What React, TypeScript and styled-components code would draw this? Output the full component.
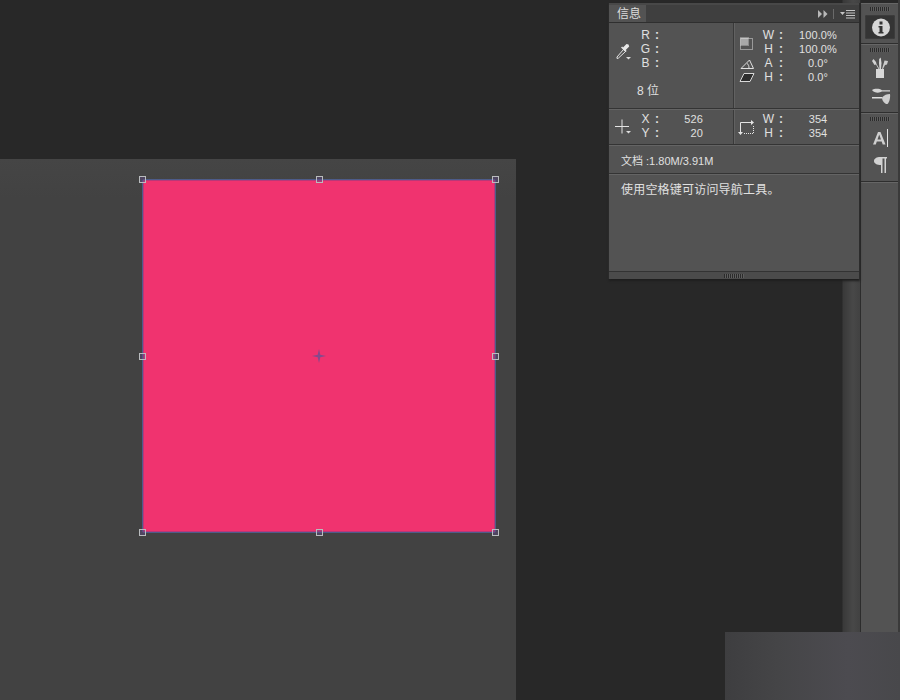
import React from "react";
import styled, { createGlobalStyle } from "styled-components";

const Global = createGlobalStyle`
  html, body { margin: 0; padding: 0; background: #282828; overflow: hidden; }
  * { box-sizing: border-box; }
`;

const Screen = styled.div`
  position: relative;
  width: 900px;
  height: 700px;
  display: flex;
  background: #282828;
  overflow: hidden;
  font-family: "Liberation Sans", "Noto Sans CJK SC", sans-serif;
`;

const Workspace = styled.div`
  flex: 1;
  min-width: 0;
  padding-top: 159px;
  background: linear-gradient(90deg, #282828 0, #282828 842px, #393939 843px, #484848 853px, #424242 859px);
`;

const Sheet = styled.div`
  width: 516px;
  height: 541px;
  padding: 20px 0 0 142px;
  background: #424242;
  background-image: linear-gradient(180deg, #454545, #424242 40px);
`;

const Shape = styled.div`
  position: relative;
  width: 354px;
  height: 354px;
  background: #f0336f;
  border: 1px solid #4d5c8a;
  border-radius: 2px;
  box-shadow: inset 0 0 0 1px rgba(120, 60, 130, 0.45);
`;

const Handle = styled.span<{ $x: number; $y: number }>`
  position: absolute;
  left: calc(${(p) => p.$x}% + ${(p) => p.$x / 100}px);
  top: calc(${(p) => p.$y}% + ${(p) => p.$y / 100}px);
  width: 7px;
  height: 7px;
  margin: -4px 0 0 -4px;
  border: 1px solid #b9bcbe;
  background: rgba(96, 74, 130, 0.45);
`;

const CenterMark = styled.svg`
  position: absolute;
  left: 50%;
  top: 50%;
  margin: -7px 0 0 -7px;
`;

const Dock = styled.div`
  flex: none;
  width: 40px;
  display: flex;
  flex-direction: column;
  background: #282828;
  border-left: 1px solid #2c2c2c;
  border-right: 2px solid #3a3a3a;
  padding-top: 3px;
`;

const DockGroup = styled.div<{ $h?: number; $grow?: boolean }>`
  display: flex;
  flex-direction: column;
  align-items: center;
  flex: ${(p) => (p.$grow ? "1" : "none")};
  height: ${(p) => (p.$h ? `${p.$h}px` : "auto")};
  background: #535353;
  border-top: 1px solid #666;
  border-bottom: 1px solid #2e2e2e;
`;

const Grip = styled.div<{ $w?: number; $flush?: boolean }>`
  flex: none;
  width: ${(p) => p.$w ?? 20}px;
  height: 4px;
  margin-top: ${(p) => (p.$flush ? 0 : 3)}px;
  background: repeating-linear-gradient(90deg, #2b2b2b 0 1px, #5e5e5e 1px 2px);
`;

const DockButton = styled.div<{ $active?: boolean }>`
  flex: none;
  width: 30px;
  height: 24px;
  margin-top: ${(p) => (p.$active ? 4 : 0)}px;
  display: flex;
  align-items: center;
  justify-content: center;
  border-radius: 2px;
  background: ${(p) => (p.$active ? "#343434" : "transparent")};
  box-shadow: ${(p) => (p.$active ? "inset 0 0 0 1px #3c3c3c" : "none")};
`;

const DockSpace = styled.div<{ $h: number }>`
  flex: none;
  height: ${(p) => p.$h}px;
`;

const Panel = styled.div`
  position: absolute;
  left: 609px;
  top: 3px;
  width: 251px;
  height: 276px;
  display: flex;
  flex-direction: column;
  background: #535353;
  border-right: 1px solid #2c2c2c;
  box-shadow: -1px 0 0 #2a2a2a, 0 2px 2px #1f1f1f;
  color: #e0e0e0;
  font-size: 11px;
`;

const TabBar = styled.div`
  flex: none;
  height: 20px;
  display: flex;
  align-items: flex-end;
  background: #3f3f3f;
  border-top: 2px solid #484848;
  border-bottom: 1px solid #2f2f2f;
`;

const Tab = styled.div`
  width: 37px;
  height: 17px;
  background: #535353;
  font-size: 12px;
  line-height: 18px;
  padding-left: 8px;
  color: #dcdcdc;
`;

const TabTools = styled.div`
  margin-left: auto;
  height: 17px;
  display: flex;
  align-items: center;
  gap: 5px;
  padding-right: 3px;
`;

const Section = styled.div<{ $h: number }>`
  flex: none;
  height: ${(p) => p.$h}px;
  display: flex;
  border-bottom: 1px solid #343434;
  box-shadow: 0 1px 0 #646464;
  margin-bottom: 1px;
`;

const Half = styled.div<{ $divider?: boolean; $top: number }>`
  flex: none;
  width: ${(p) => (p.$divider ? 125 : 126)}px;
  display: flex;
  padding-top: ${(p) => p.$top}px;
  border-right: ${(p) => (p.$divider ? "1px solid #3a3a3a" : "none")};
  box-shadow: ${(p) => (p.$divider ? "1px 0 0 #626262" : "none")};
`;

const IconCol = styled.div<{ $w: number; $top?: number }>`
  flex: none;
  width: ${(p) => p.$w}px;
  padding-top: ${(p) => p.$top ?? 0}px;
  display: flex;
  flex-direction: column;
  align-items: center;
`;

const IconGap = styled.div<{ $h: number }>`
  flex: none;
  height: ${(p) => p.$h}px;
`;

const Rows = styled.div`
  flex: 1;
  min-width: 0;
`;

const Row = styled.div<{ $colon: number }>`
  height: 14px;
  line-height: 14px;
  display: grid;
  grid-template-columns: 17px ${(p) => p.$colon}px 1fr;
  white-space: nowrap;
`;

const Label = styled.span`
  text-align: center;
  font-size: 12px;
`;

const Colon = styled.span`
  text-align: center;
  font-size: 12px;
  font-weight: 700;
`;

const Value = styled.span<{ $center?: boolean; $pad: number }>`
  text-align: ${(p) => (p.$center ? "center" : "right")};
  padding-right: ${(p) => p.$pad}px;
  font-size: 11px;
  letter-spacing: 0.1px;
`;

const BitDepth = styled.div`
  padding-top: 14px;
  height: 28px;
  line-height: 14px;
  font-size: 12px;
  white-space: nowrap;
`;

const DocLine = styled.div`
  height: 100%;
  padding: 8px 0 0 12px;
  font-size: 11px;
  line-height: 14px;
`;

const Hint = styled.div`
  flex: 1;
  padding: 7px 0 0 12px;
  font-size: 12px;
  line-height: 16px;
  letter-spacing: 0.2px;
`;

const Footer = styled.div`
  flex: none;
  height: 8px;
  display: flex;
  justify-content: center;
  align-items: center;
  background: #4b4b4b;
  border-top: 1px solid #333;
`;

const Smudge = styled.div`
  position: absolute;
  left: 725px;
  top: 632px;
  width: 175px;
  height: 68px;
  background: linear-gradient(90deg, #3e3e40 0, #454547 30%, #4c4b50 70%, #48484b 100%);
`;

const Info = () => (
  <svg width="24" height="24" viewBox="0 0 24 24">
    <circle cx="13" cy="12.500" r="9" fill="#d6d6d6" />
    <rect x="11.500" y="6.500" width="3" height="3" fill="#343434" />
    <path d="M10.500 11h4v6h1v1.500h-5V17h1v-4.500h-1z" fill="#343434" />
  </svg>
);

const Brushes = () => (
  <svg width="24" height="24" viewBox="0 0 24 24">
    <path d="M8 13h8v9H8z" fill="#d8d8d8" />
    <path d="M10.500 13 8 8.500 6.500 9 4 5l1.500-2L8 6l.5 2 3 5z" fill="#d2d2d2" />
    <path d="M11.500 13 11 7l.2-4 1.500-1.500L13.500 7l-.5 6z" fill="#d8d8d8" />
    <path d="M14 13l1.500-5L16.500 4.500l3.500.5-1 3.500-2 .5L15 13z" fill="#cccccc" />
  </svg>
);

const Presets = () => (
  <svg width="24" height="24" viewBox="0 0 24 24">
    <path d="M4 6c2-1.500 7-2 10 .2h8v1.400h-8C11 9.500 6 9 4 6z" fill="#d4d4d4" />
    <path d="M4 13h10v1.500H4z" fill="#e0e0e0" />
    <path d="M14 13.500c2-2.500 5-3.500 8-3.500 .5 3.500-.5 8-2.500 10-2.500.5-5.500-3-5.500-6.500z" fill="#cfcfcf" />
  </svg>
);

const CharIcon = () => (
  <svg width="24" height="24" viewBox="0 0 24 24">
    <path d="M5 18.500 10 6h2.500l5 12.500h-2.800l-1-3H8.800l-1 3zM9.500 13.500h3.500L11.200 8.500z" fill="#cfcfcf" />
    <path d="M19.500 3v18" stroke="#e2e2e2" strokeWidth="1" />
  </svg>
);

const ParaIcon = () => (
  <svg width="24" height="24" viewBox="0 0 24 24">
    <path d="M19 4v1.500h-1V20h-1.500V5.500h-2V20H13v-8C9 12 6 10.500 6 8s3-4 6-4z" fill="#d2d2d2" />
  </svg>
);

const Dropper = () => (
  <svg width="18" height="20" viewBox="0 0 18 20">
    <path d="M3 16 9.500 8.500l2 2-7 6.500-1.500.5z" fill="none" stroke="#e6e6e6" strokeWidth="1" />
    <path d="M9 6.500 12.500 3l2 .5.700 2-3.500 3.500 1 1-1.200 1-4.500-4.500 1.200-1z" fill="#e8e8e8" />
    <path d="M12 16h5l-2.500 2.500z" fill="#dcdcdc" />
  </svg>
);

const SizeIcon = () => (
  <svg width="16" height="16" viewBox="0 0 16 16">
    <rect x="2" y="2" width="7" height="7" fill="#a8a8a8" />
    <rect x="1.500" y="1.500" width="8" height="8" fill="none" stroke="#8a8a8a" />
    <rect x="1.500" y="2.500" width="12" height="11" fill="none" stroke="#e0e0e0" strokeDasharray="1 1" />
  </svg>
);

const AngleIcon = () => (
  <svg width="16" height="14" viewBox="0 0 16 14">
    <path d="M2 11.500h12.500L10.500 3z" fill="none" stroke="#e0e0e0" />
    <path d="M8 6.500c1.500.7 2 2.500 2 5" fill="none" stroke="#e0e0e0" />
  </svg>
);

const SkewIcon = () => (
  <svg width="16" height="14" viewBox="0 0 16 14">
    <path d="M5 2.500h10L11 10.500H1z" fill="#2e2e2e" stroke="#d8d8d8" />
  </svg>
);

const Cross = () => (
  <svg width="18" height="18" viewBox="0 0 18 18">
    <path d="M1 8.500h14M8 1.500v14" stroke="#e4e4e4" strokeWidth="1" />
    <path d="M12 13h5l-2.500 2.500z" fill="#dcdcdc" />
  </svg>
);

const BoxSize = () => (
  <svg width="18" height="18" viewBox="0 0 18 18">
    <path d="M2.500 15V4.500h11" fill="none" stroke="#e4e4e4" />
    <path d="M13 2v5l3-2.500zM0 14h5l-2.500 3z" fill="#e4e4e4" />
    <path d="M6 15.500h9.500V8" fill="none" stroke="#e4e4e4" strokeDasharray="1 1" />
  </svg>
);

const handles: [number, number][] = [
  [0, 0], [50, 0], [100, 0],
  [0, 50], [100, 50],
  [0, 100], [50, 100], [100, 100],
];

const LEFT_COLON = 6;
const RIGHT_COLON = 8;

export default function App() {
  return (
    <Screen>
      <Global />
      <Workspace>
        <Sheet>
          <Shape>
            {handles.map(([x, y]) => (
              <Handle key={`${x}-${y}`} $x={x} $y={y} />
            ))}
            <CenterMark width="14" height="14" viewBox="0 0 14 14">
              <path d="M7 0 8.300 5.700 14 7 8.300 8.300 7 14 5.700 8.300 0 7 5.700 5.700z" fill="#6a4f93" fillOpacity=".8" />
            </CenterMark>
          </Shape>
        </Sheet>
      </Workspace>

      <Dock>
        <DockGroup $h={41}>
          <Grip />
          <DockButton $active>
            <Info />
          </DockButton>
        </DockGroup>
        <DockGroup $h={69}>
          <Grip />
          <DockSpace $h={4} />
          <DockButton>
            <Brushes />
          </DockButton>
          <DockSpace $h={4} />
          <DockButton>
            <Presets />
          </DockButton>
        </DockGroup>
        <DockGroup $h={69}>
          <Grip />
          <DockSpace $h={5} />
          <DockButton>
            <CharIcon />
          </DockButton>
          <DockSpace $h={3} />
          <DockButton>
            <ParaIcon />
          </DockButton>
        </DockGroup>
        <DockGroup $grow />
      </Dock>

      <Panel>
        <TabBar>
          <Tab>信息</Tab>
          <TabTools>
            <svg width="18" height="10" viewBox="0 0 18 10">
              <path d="M1 1 5 5 1 9zM6.500 1 10.500 5 6.500 9z" fill="#b8b8b8" />
              <path d="M16.500 0v10" stroke="#6a6a6a" strokeWidth="1" />
            </svg>
            <svg width="16" height="10" viewBox="0 0 16 10">
              <path d="M0 3h5L2.500 6zM6 1h9v1H6zM6 3.500h9v1H6zM6 6h9v1H6zM6 8.500h9v1H6z" fill="#c4c4c4" />
            </svg>
          </TabTools>
        </TabBar>

        <Section $h={86}>
          <Half $divider $top={5}>
            <IconCol $w={28} $top={13}>
              <Dropper />
            </IconCol>
            <Rows>
              <Row $colon={LEFT_COLON}><Label>R</Label><Colon>:</Colon></Row>
              <Row $colon={LEFT_COLON}><Label>G</Label><Colon>:</Colon></Row>
              <Row $colon={LEFT_COLON}><Label>B</Label><Colon>:</Colon></Row>
              <BitDepth>8 位</BitDepth>
            </Rows>
          </Half>
          <Half $top={5}>
            <IconCol $w={26} $top={8}>
              <SizeIcon />
              <IconGap $h={5} />
              <AngleIcon />
              <SkewIcon />
            </IconCol>
            <Rows>
              <Row $colon={RIGHT_COLON}><Label>W</Label><Colon>:</Colon><Value $center $pad={9}>100.0%</Value></Row>
              <Row $colon={RIGHT_COLON}><Label>H</Label><Colon>:</Colon><Value $center $pad={9}>100.0%</Value></Row>
              <Row $colon={RIGHT_COLON}><Label>A</Label><Colon>:</Colon><Value $center $pad={9}>0.0°</Value></Row>
              <Row $colon={RIGHT_COLON}><Label>H</Label><Colon>:</Colon><Value $center $pad={9}>0.0°</Value></Row>
            </Rows>
          </Half>
        </Section>

        <Section $h={35}>
          <Half $divider $top={2}>
            <IconCol $w={28} $top={6}>
              <Cross />
            </IconCol>
            <Rows>
              <Row $colon={LEFT_COLON}><Label>X</Label><Colon>:</Colon><Value $pad={30}>526</Value></Row>
              <Row $colon={LEFT_COLON}><Label>Y</Label><Colon>:</Colon><Value $pad={30}>20</Value></Row>
            </Rows>
          </Half>
          <Half $top={2}>
            <IconCol $w={26} $top={6}>
              <BoxSize />
            </IconCol>
            <Rows>
              <Row $colon={RIGHT_COLON}><Label>W</Label><Colon>:</Colon><Value $center $pad={9}>354</Value></Row>
              <Row $colon={RIGHT_COLON}><Label>H</Label><Colon>:</Colon><Value $center $pad={9}>354</Value></Row>
            </Rows>
          </Half>
        </Section>

        <Section $h={28}>
          <DocLine>文档 :1.80M/3.91M</DocLine>
        </Section>

        <Hint>使用空格键可访问导航工具。</Hint>

        <Footer>
          <Grip $w={20} $flush />
        </Footer>
      </Panel>

      <Smudge />
    </Screen>
  );
}
